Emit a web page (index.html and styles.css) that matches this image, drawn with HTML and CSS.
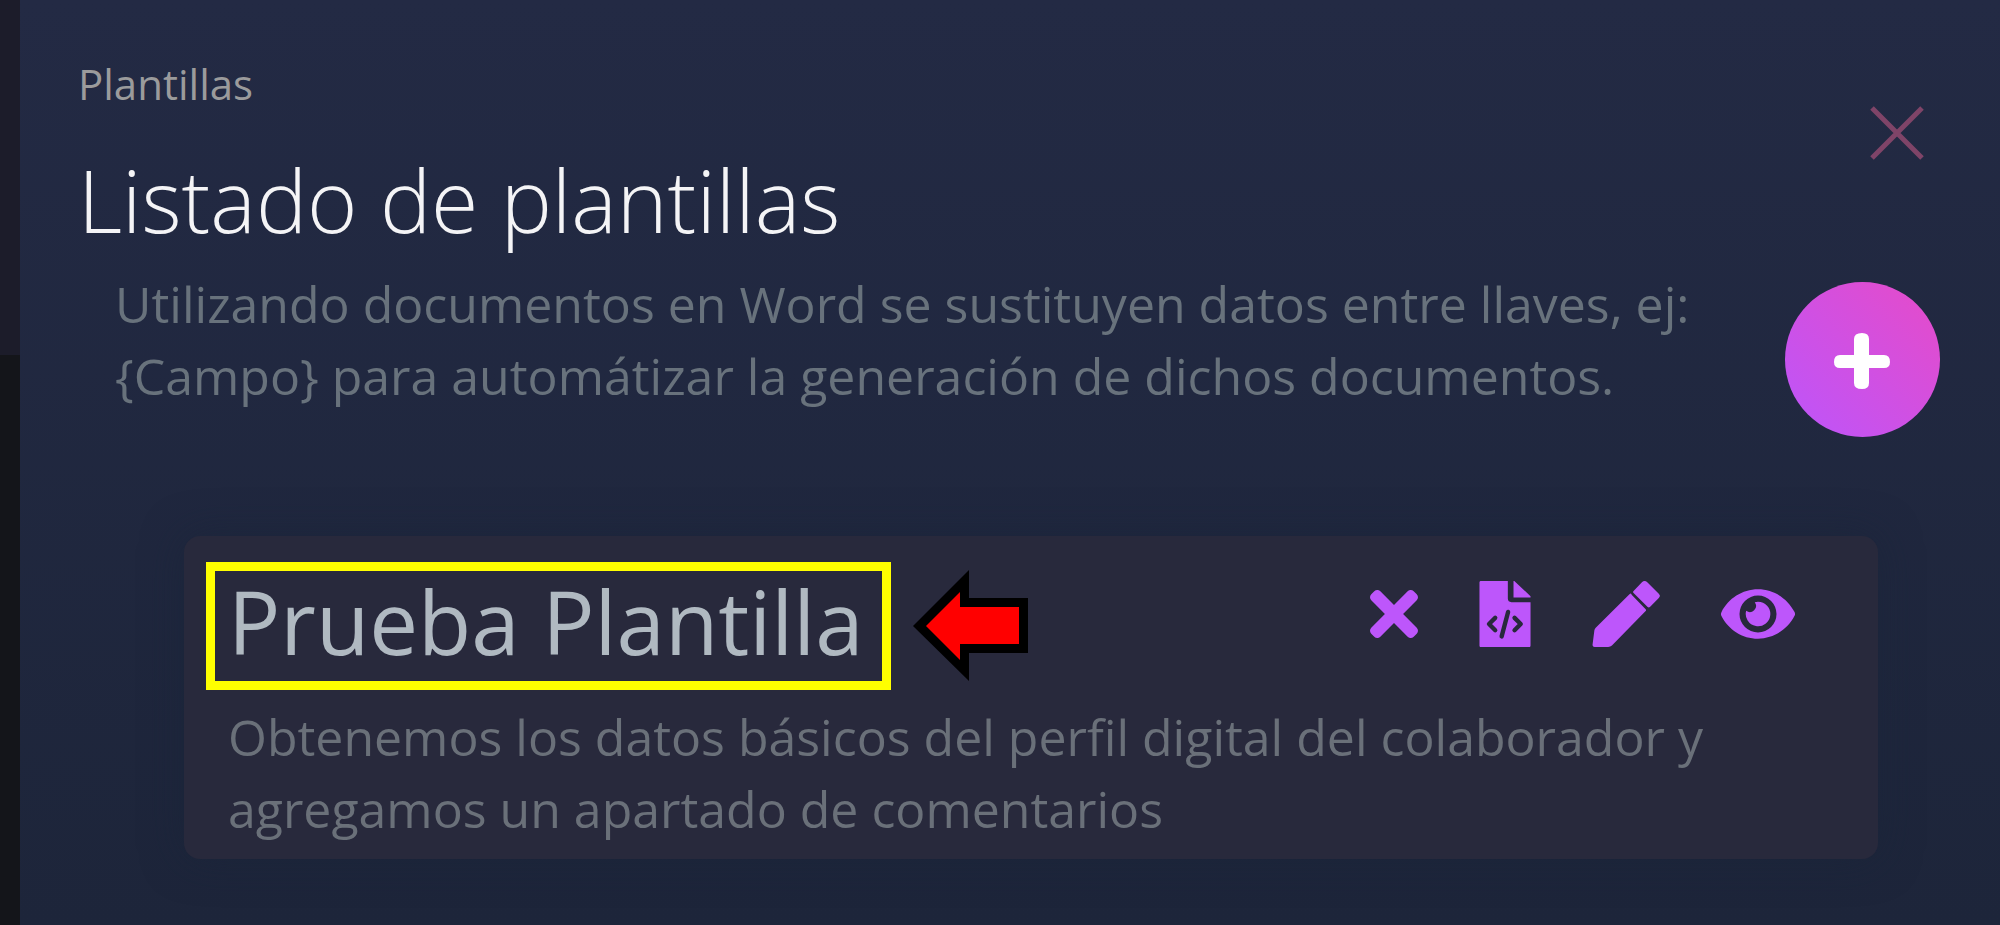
FILE: index.html
```html
<!DOCTYPE html>
<html lang="es">
<head>
    <meta charset="UTF-8">
    <title>Listado de plantillas</title>
    <link rel="stylesheet" href="styles.css">
</head>
<body>
    <div class="page">
        <div class="backdrop"></div>
        <main class="panel">
            <div class="panel-header">
                <div>
                    <p class="section-name">Plantillas</p>
                    <h1 class="panel-title">Listado de plantillas</h1>
                </div>
                <button type="button" class="close-button" aria-label="Cerrar">
                    <svg width="54" height="54" viewBox="0 0 54 54"><path d="M2 2L52 52M52 2L2 52" fill="none" stroke="currentColor" stroke-width="5"/></svg>
                </button>
            </div>
            <div class="panel-intro">
                <p class="intro-text">Utilizando documentos en Word se sustituyen datos entre llaves, ej: {Campo} para automátizar la generación de dichos documentos.</p>
                <button type="button" class="add-button" aria-label="Agregar">
                    <svg width="58" height="58" viewBox="0 0 58 58"><path d="M20 8Q20 2 28 2Q35 2 35 8V24H50Q56 24 56 31Q56 37 50 37H35V52Q35 58 28 58Q20 58 20 52V37H6Q0 37 0 31Q0 24 6 24H20Z" fill="currentColor"/></svg>
                </button>
            </div>
            <article class="template-card">
                <div class="template-header">
                    <h2 class="template-title">Prueba Plantilla</h2>
                    <svg class="arrow" width="116" height="112" viewBox="0 0 116 112">
                        <path d="M0 56L56 0V28H115V83H56V111Z" fill="#000"/>
                        <path d="M13 56L47 22V37H106V74H47V90Z" fill="#f00"/>
                    </svg>
                    <div class="template-actions">
                        <button type="button" aria-label="Eliminar">
                            <svg width="48" height="70" viewBox="0 0 352 512"><path d="M242.72 256l100.07-100.07c12.28-12.28 12.28-32.19 0-44.48l-22.24-22.24c-12.28-12.28-32.19-12.28-44.48 0L176 189.28 75.93 89.21c-12.28-12.28-32.19-12.28-44.48 0L9.21 111.45c-12.28 12.28-12.28 32.19 0 44.48L109.28 256 9.21 356.07c-12.28 12.28-12.28 32.19 0 44.48l22.24 22.24c12.28 12.28 32.2 12.28 44.48 0L176 322.72l100.07 100.07c12.28 12.28 32.2 12.28 44.48 0l22.24-22.24c12.28-12.28 12.28-32.19 0-44.48L242.72 256z"/></svg>
                        </button>
                        <button type="button" aria-label="Código">
                            <svg width="52" height="66" viewBox="0 0 396 512">
                                <path d="M396 118V128H264V0H270L396 118zM248 164C230 164 220 154 220 136V0H12C4 0 0 4 0 12V500C0 508 4 512 12 512H384C392 512 396 508 396 500V164Z"/>
                                <path class="code-mark" d="M122 286L74 334L122 382M272 286L320 334L272 382M222 240L172 430"/>
                            </svg>
                        </button>
                        <button type="button" aria-label="Editar">
                            <svg width="68" height="66" viewBox="0 0 512 512" preserveAspectRatio="none"><path d="M503 132L436 202C431 207 424 207 419 202L313 94C308 89 308 82 313 77L376 10C388 -3 404 -3 416 10L503 98C514 110 514 121 503 132zM284 100L28 362Q20 370 18 382L4 494Q2 512 20 512H122Q138 511 150 500L404 232Q410 226 404 220L300 108Q292 92 284 100z"/></svg>
                        </button>
                        <button type="button" aria-label="Ver">
                            <svg width="74" height="66" viewBox="0 0 576 512"><path d="M572.52 241.4C518.29 135.59 410.93 64 288 64S57.68 135.64 3.48 241.41a32.35 32.35 0 0 0 0 29.19C57.71 376.41 165.07 448 288 448s230.32-71.64 284.52-177.41a32.35 32.35 0 0 0 0-29.19zM288 400a144 144 0 1 1 144-144 143.93 143.93 0 0 1-144 144zm0-240a95.31 95.31 0 0 0-25.31 3.79 47.85 47.85 0 0 1-66.9 66.9A95.78 95.78 0 1 0 288 160z"/></svg>
                        </button>
                    </div>
                </div>
                <p class="template-text">Obtenemos los datos básicos del perfil digital del colaborador y agregamos un apartado de comentarios</p>
            </article>
        </main>
    </div>
</body>
</html>
```
FILE: styles.css
```css
body {
    margin: 0;
    font-family: "Open Sans", "Noto Sans", sans-serif;
    background-color: #14151a;
}
h1,
h2,
p {
    margin: 0;
    font-weight: 400;
}
button {
    display: flex;
    align-items: center;
    justify-content: center;
    padding: 0;
    border: 0;
    background: none;
    cursor: pointer;
}
.page {
    display: flex;
    min-height: 100vh;
}
.backdrop {
    width: 20px;
    background: linear-gradient(#1c1c2a 355px, #14151a 355px);
}
.panel {
    flex: 1;
    box-sizing: border-box;
    padding: 56px 60px 64px 58px;
    background: linear-gradient(#232a44, #1d253a);
}
.panel-header {
    display: flex;
    justify-content: space-between;
    align-items: flex-start;
    padding-right: 16px;
}
.section-name {
    font-size: 42px;
    line-height: 56px;
    color: #9b9b9c;
}
.panel-title {
    margin-top: 38px;
    font-size: 86px;
    line-height: 100px;
    font-weight: 350;
    color: #f4f4f6;
}
.close-button {
    margin-top: 50px;
    color: #7f4468;
}
.panel-intro {
    display: flex;
    justify-content: space-between;
    align-items: flex-end;
    margin-top: 18px;
    padding-left: 37px;
}
.intro-text {
    max-width: 1600px;
    align-self: flex-start;
    font-size: 50px;
    line-height: 72px;
    color: #68727c;
}
.add-button {
    flex: none;
    width: 155px;
    height: 155px;
    margin-top: 14px;
    border-radius: 50%;
    background: linear-gradient(45deg, #bc55fb, #e64bc8);
    color: #fff;
}
.template-card {
    margin: 99px 62px 0 106px;
    padding: 26px 22px 14px;
    border-radius: 16px;
    background-color: #28293c;
    box-shadow: 0 0 40px rgba(24, 36, 56, 0.5);
}
.template-header {
    display: flex;
    align-items: center;
}
.template-title {
    padding: 0 18px 10px 13px;
    border: 9px solid #ff0;
    font-size: 87px;
    line-height: 100px;
    color: #b0b9c1;
}
.arrow {
    margin-left: 22px;
}
.template-actions {
    display: flex;
    align-items: center;
    gap: 61px;
    margin: 0 61px 24px auto;
}
.template-actions svg {
    fill: #bd56fb;
}
.template-actions .code-mark {
    fill: none;
    stroke: #28293c;
    stroke-width: 34px;
    stroke-linecap: round;
    stroke-linejoin: round;
}
.template-text {
    max-width: 1560px;
    margin-top: 11px;
    padding-left: 22px;
    font-size: 50px;
    line-height: 72px;
    color: #6a7079;
}
```
